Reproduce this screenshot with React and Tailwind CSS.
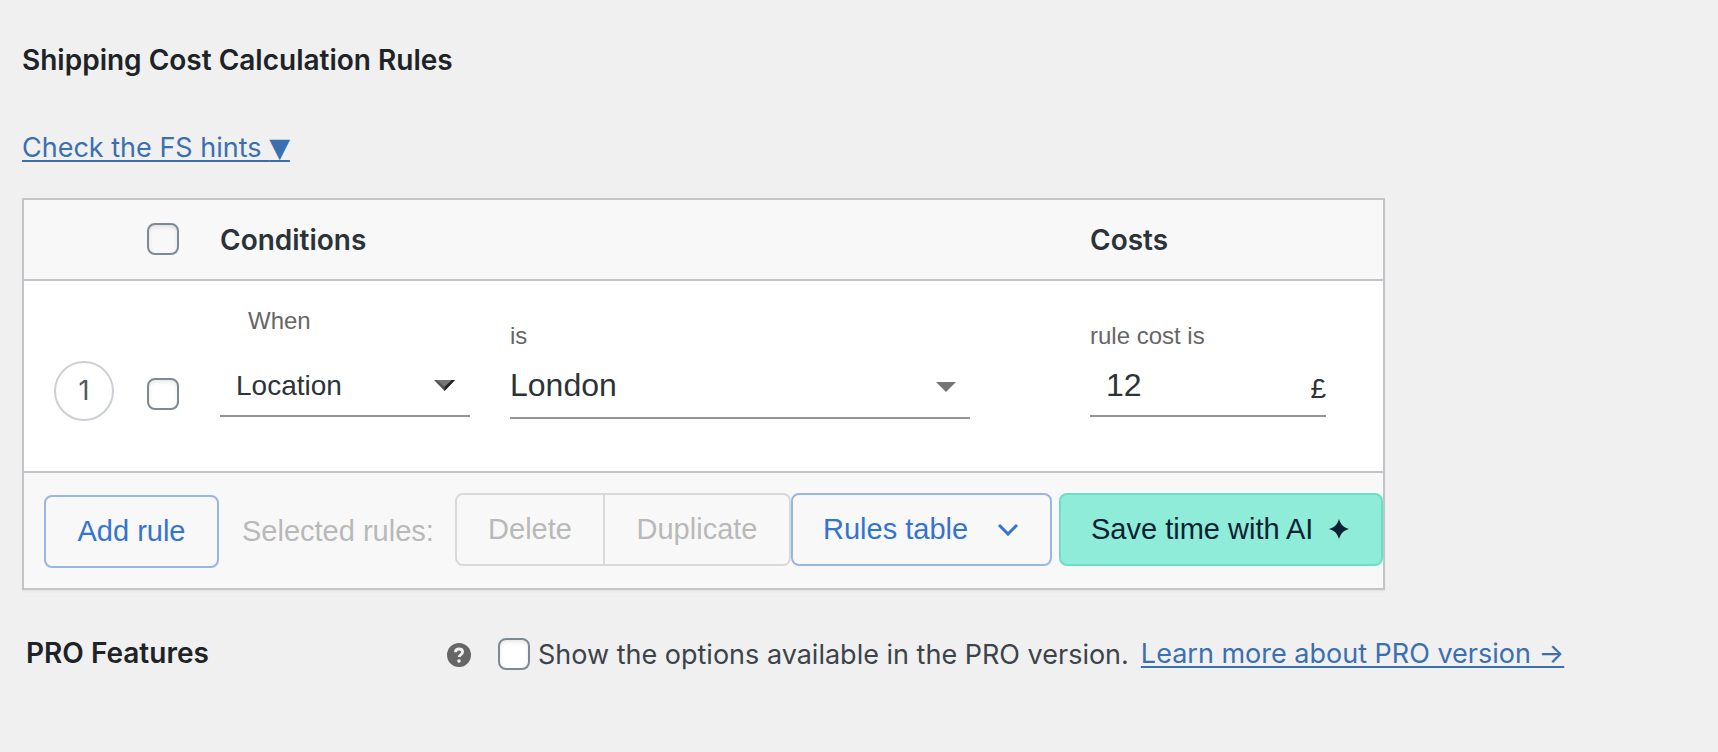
import React from 'react';

const checkboxClass =
  'appearance-none block w-8 h-8 shrink-0 rounded-lg border-2 border-[#7e8993] shadow-[inset_0_2px_4px_rgba(0,0,0,0.1)]';

const buttonClass = 'h-[73px] pb-0.5 rounded-lg border-2 text-[29px] leading-8 whitespace-nowrap';

const CaretIcon = ({ shaded }) => (
  <svg className="absolute top-1/2 right-3 w-6 h-3 -translate-y-1/2 pointer-events-none" viewBox="0 0 24 12">
    {shaded ? (
      <>
        <path d="M0 1h21L10.500 12z" fill="#555" />
        <path d="M3 1h15l-7.500 7z" fill="#757575" />
        <path d="M18 1h3L10.500 12V8z" fill="#222" />
      </>
    ) : (
      <path d="M2 1h20L12 11z" fill="#757575" />
    )}
  </svg>
);

const SelectField = ({ id, value, className, shaded }) => (
  <div className="relative">
    <select
      id={id}
      defaultValue={value}
      className={`appearance-none block w-full h-16 bg-transparent border-b-2 border-[#949494] text-[#2c3338] ${className}`}
    >
      <option>{value}</option>
    </select>
    <CaretIcon shaded={shaded} />
  </div>
);

const RulesTable = () => (
  <table className="w-full max-w-[1363px] table-fixed border-separate border-spacing-0 border-2 border-[#c3c4c7] bg-white shadow-[0_2px_2px_rgba(0,0,0,0.04)] font-['Liberation_Sans',Arial,sans-serif] text-[#2c3338]">
    <colgroup>
      <col className="w-[123px]" />
      <col className="w-[73px]" />
      <col />
      <col className="w-[293px]" />
    </colgroup>
    <thead>
      <tr className="h-[81px] bg-[#f8f8f8] text-left text-[28px] leading-8 font-['Inter',sans-serif]">
        <th className="border-b-2 border-[#c3c4c7]"></th>
        <th className="border-b-2 border-[#c3c4c7] pb-0.5">
          <input type="checkbox" aria-label="Select all rules" className={checkboxClass} />
        </th>
        <th className="border-b-2 border-[#c3c4c7] font-semibold">Conditions</th>
        <th className="border-b-2 border-[#c3c4c7] font-semibold">Costs</th>
      </tr>
    </thead>
    <tbody>
      <tr className="h-[192px] align-top">
        <td className="border-b-2 border-[#c3c4c7] pt-20 pl-[30px]">
          <span className="flex items-center justify-center w-[60px] h-[60px] rounded-full border-2 border-[#ccd0d4] font-['Inter',sans-serif] text-[27px] text-[#50575e]">
            1
          </span>
        </td>
        <td className="border-b-2 border-[#c3c4c7] pt-[97px]">
          <input type="checkbox" aria-label="Select rule 1" className={checkboxClass} />
        </td>
        <td className="border-b-2 border-[#c3c4c7]">
          <div className="flex items-start gap-10">
            <div className="w-[250px] pt-6">
              <label htmlFor="condition" className="block pl-7 mb-4 text-2xl leading-8 text-[#666]">
                When
              </label>
              <SelectField id="condition" value="Location" className="pt-1 pl-4 text-[28px]" shaded />
            </div>
            <div className="w-[460px] pt-[39px]">
              <label htmlFor="location" className="block mb-[3px] text-2xl leading-8 text-[#666]">
                is
              </label>
              <SelectField id="location" value="London" className="pb-0.5 text-[32px]" />
            </div>
          </div>
        </td>
        <td className="border-b-2 border-[#c3c4c7] pt-[39px]">
          <label htmlFor="cost" className="block mb-px text-2xl leading-8 text-[#666]">
            rule cost is
          </label>
          <div className="flex items-center w-[236px] h-16 border-b-2 border-[#949494]">
            <input id="cost" type="text" defaultValue="12" className="flex-1 min-w-0 h-full pt-0.5 pl-4 text-[32px]" />
            <span className="pt-2.5 text-[28px]">£</span>
          </div>
        </td>
      </tr>
    </tbody>
    <tfoot>
      <tr className="h-[115px] bg-[#f8f8f8] align-top">
        <td colSpan={4}>
          <div className="flex items-start">
            <div className="flex items-center w-[431px] pt-[22px] pl-5">
              <button type="button" className={`${buttonClass} w-[175px] border-[#98b6e4] text-[#3573d1]`}>
                Add rule
              </button>
              <span className="ml-[23px] pb-0.5 text-[29px] leading-8 whitespace-nowrap text-[#b9b9b9]">Selected rules:</span>
            </div>
            <div className="flex flex-1 pt-5">
              <div className="flex">
                <button type="button" disabled className={`${buttonClass} w-[150px] rounded-r-none border-[#d9d9d9] text-[#b9b9b9]`}>
                  Delete
                </button>
                <button type="button" disabled className={`${buttonClass} w-[186px] rounded-l-none border-l-0 border-[#d9d9d9] text-[#b9b9b9]`}>
                  Duplicate
                </button>
              </div>
              <button type="button" className={`${buttonClass} flex items-center justify-between w-[261px] pl-[30px] pr-8 border-[#98b6e4] text-[#3573d1]`}>
                Rules table
                <svg className="w-5 h-3 mt-0.5" viewBox="0 0 20 12" fill="none" stroke="currentColor" strokeWidth="3">
                  <path d="M1 1l9 9 9-9" />
                </svg>
              </button>
              <button type="button" className={`${buttonClass} flex items-center justify-between flex-1 ml-[7px] pl-[30px] pr-8 border-[#66e2c0] bg-[#8eecd9] text-[#0c2233]`}>
                Save time with AI
                <svg className="w-5 h-5" viewBox="0 0 20 20" fill="currentColor">
                  <path d="M10 0C11 3 12 5 13.500 6.500S17 9 20 10c-3 1-5 2-6.500 3.500S11 17 10 20C9 17 8 15 6.500 13.500S3 11 0 10c3-1 5-2 6.500-3.500S9 3 10 0z" />
                </svg>
              </button>
            </div>
          </div>
        </td>
      </tr>
    </tfoot>
  </table>
);

const ProFeatures = () => (
  <div className="flex items-center mt-[45px] pl-1 text-[27px] leading-9">
    <h2 className="w-[421px] pb-0.5 text-[28px] font-semibold text-[#1d2327]">PRO Features</h2>
    <svg className="w-6 h-6 mt-0.5 shrink-0" viewBox="0 0 24 24" aria-label="Help">
      <circle cx="12" cy="12" r="12" fill="#666" />
      <path d="M8.500 9.200C8.500 7 10 6 12 6s3.600 1 3.600 3c0 2.600-3.400 2.500-3.400 5" fill="none" stroke="#f0f0f0" strokeWidth="2.800" />
      <circle cx="12" cy="18" r="1.800" fill="#f0f0f0" />
    </svg>
    <input id="pro" type="checkbox" className={`${checkboxClass} ml-[27px] bg-white`} />
    <label htmlFor="pro" className="ml-2 pt-0.5 whitespace-nowrap text-[#3c434a]">
      Show the options available in the PRO version.
    </label>
    <a href="#pro" className="ml-3 whitespace-nowrap underline decoration-2 underline-offset-3 text-[#3a6fb0]">
      Learn more about PRO version →
    </a>
  </div>
);

const App = () => (
  <main className="min-h-screen bg-[#f0f0f0] px-[22px] pt-10 pb-10 font-['Inter',sans-serif]">
    <h1 className="text-[28px] leading-10 font-semibold text-[#1d2327]">Shipping Cost Calculation Rules</h1>
    <p className="mt-12 mb-[30px] h-10 text-[27px] leading-10">
      <a href="#hints" className="underline decoration-2 underline-offset-3 text-[#3a6fb0]">
        Check the FS hints <span className="font-['DejaVu_Sans'] text-[27px] leading-8">▼</span>
      </a>
    </p>
    <RulesTable />
    <ProFeatures />
  </main>
);

export default App;
